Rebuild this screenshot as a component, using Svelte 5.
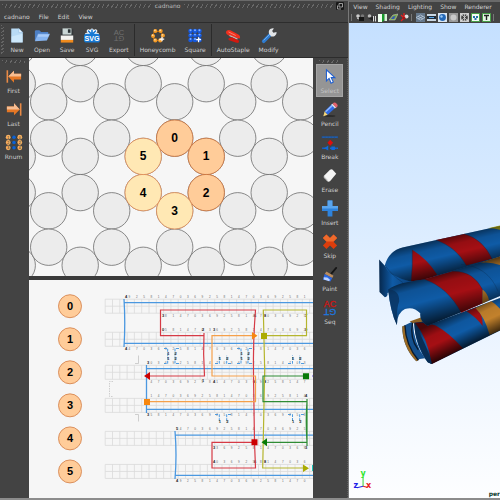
<script>
  const menus = ['cadnano', 'File', 'Edit', 'View'];
  const mainTools = [
    ['New', 'Open', 'Save', 'SVG', 'Export'],
    ['Honeycomb', 'Square'],
    ['AutoStaple', 'Modify']
  ];
  const sliceTools = ['First', 'Last', 'Rnum'];
  const pathTools = ['Select', 'Pencil', 'Break', 'Erase', 'Insert', 'Skip', 'Paint', 'Seq'];
  let active = $state('Select');

  const sceneMenus = ['View', 'Shading', 'Lighting', 'Show', 'Renderer'];
  const sceneTools = [
    ['camera', 'reel', 'book', 'plane', 'axis'],
    ['grid', 'film', 'ball', 'disc', 'wire', 'tex', 'light']
  ];

  // Honeycomb lattice: two alternating column types
  const lattice = [];
  for (let c = 0; c < 10; c++) {
    const x = 17.2 + c * 31.5;
    const ys = c % 2 === 0 ? [47.4, 83.7, 156.4, 192.6, 265.3] : [29.3, 101.8, 138.2, 210.8, 247.2];
    for (const y of ys) lattice.push({ x, y });
  }
  const helices = [
    { n: 0, x: 174.7, y: 138.2, scaf: true },
    { n: 1, x: 206.2, y: 156.4, scaf: true },
    { n: 2, x: 206.2, y: 192.6, scaf: true },
    { n: 3, x: 174.7, y: 210.8, scaf: false },
    { n: 4, x: 143.2, y: 192.6, scaf: false },
    { n: 5, x: 143.2, y: 156.4, scaf: false }
  ];

  const rows = [0, 1, 2, 3, 4, 5].map((n) => ({ n, y: 306.2 + n * 33.05 }));
  const cell = 7.3;
  const cols = Array.from({ length: 29 }, (_, i) => 105.2 + i * cell);
  const above = [124, 160, 146, 146, 175, 212];
  const below = [160, 124, 146, 146, 212, 175];
  const digits = (from, seed) =>
    cols.map((x, i) => ({ x: x + 1.5, d: (i * 3 + seed) % 10 })).filter((p) => p.x > from - 2 && p.x < 311);

  const brackets = [
    'M164 348.5h3.7v15h-3.7', 'M179 348.5h-4v15h4',
    'M215 363.5h4.3v-8', 'M231 363.5h-4.3v-8',
    'M237 348.5h4v15h-4', 'M252 348.5h-4v15h4',
    'M288 363.5h4.5v-8', 'M304 363.5h-4.3v-8',
    'M215 414.5h4.3v7', 'M231 414.5h-4.3v7',
    'M288 414.5h4.5v7', 'M304 414.5h-4.3v7'
  ];
  const marks = [[167.7, 353], [175, 353], [167.7, 358], [175, 358], [219.3, 358], [226.7, 358], [241, 353], [248, 353], [241, 358], [248, 358], [292.5, 358], [299.7, 358], [219.3, 421], [226.7, 421], [292.5, 421], [299.7, 421]];
</script>

{#snippet icon(name)}
  <svg class="icon" viewBox="0 0 18 18" aria-hidden="true">
    {#if name === 'New'}
      <path d="M2.500 1h8.500l4.500 4.500V17h-13z" fill="#b9dbf5" />
      <path d="M3 10l12-3v9.500H3z" fill="#cde8fb" />
      <path d="M11 1l4.500 4.500H11z" fill="#eef8ff" stroke="#7fb2dc" stroke-width=".5" />
    {:else if name === 'Open'}
      <path d="M1 15V4l1-1h4l2 2h8v3z" fill="#4d7fc4" />
      <path d="M1 15.500L4.500 7H18l-3.500 7.500z" fill="#86b4f0" />
      <path d="M4.800 8H17l-1 2.500H4z" fill="#a9cbf8" />
    {:else if name === 'Save'}
      <path d="M2 2h14v15H2z" fill="#34383a" />
      <path d="M4 1h10v7H4z" fill="#c9d6d4" />
      <path d="M10 2h3v4h-3z" fill="#2c3436" />
      <path d="M2 9h14v5H2z" fill="#f4f4f0" />
      <path d="M2 14h14v3H2z" fill="#f08a1c" />
    {:else if name === 'SVG'}
      <g stroke="#fff" stroke-width="4" stroke-linecap="round"><path d="M9 8V3M9 8L5 4M9 8l4-4M9 8H3M9 8h6" /></g>
      <rect x="0" y="7" width="18" height="10" rx="3" fill="#1779d4" />
      <g stroke="#1779d4" stroke-width="1.800" stroke-linecap="round"><path d="M9 8V3M9 8L5 4M9 8l4-4" /></g>
      <text x="9" y="15.200" text-anchor="middle" font-size="8" font-weight="bold" fill="#fff">SVG</text>
    {:else if name === 'Export'}
      <g font-size="8.500" fill="#707070" text-anchor="middle">
        <text x="9" y="8">AC</text>
        <text x="9" y="8" transform="rotate(180 9 9)">GT</text>
      </g>
    {:else if name === 'Seq'}
      <g font-size="10" text-anchor="middle" stroke-width=".3">
        <text x="9" y="8.500" fill="#d01414" stroke="#d01414">AC</text>
        <text x="9" y="8.500" fill="#1c78e0" stroke="#1c78e0" transform="rotate(180 9 9.500)">GT</text>
      </g>
    {:else if name === 'Honeycomb'}
      <path d="M5 4.500L12 4.500 15 9.500 12 14.500 5 14.500 2.500 9.500z" fill="none" stroke="#c96a00" stroke-width="1" />
      {#each [[6, 4], [12, 4], [3.5, 9.500], [14.500, 9], [6, 14.500], [11.500, 14.500]] as [x, y]}
        <circle cx={x} cy={y} r="2.300" fill="#f39a26" /><circle cx={x - 0.5} cy={y - 0.8} r="1" fill="#ffd798" />
      {/each}
      <path d="M13.500 10.500v5M11 13h5" stroke="#fff" stroke-width="1.400" />
    {:else if name === 'Square'}
      {#each [4, 9, 14] as x}{#each [4, 9, 14] as y}
        <circle cx={x} cy={y} r="2.600" fill="#1558dd" /><circle cx={x} cy={y - 1} r="1.100" fill="#7fb0ff" />
      {/each}{/each}
      <path d="M13 11v5.500M10.300 13.700h5.500" stroke="#fff" stroke-width="1.400" />
    {:else if name === 'AutoStaple'}
      <path d="M1 5Q2 2 6 3L15 8q3 2 1.500 4.500L14 12 4 9Q1 8 1 5z" fill="#f0301e" />
      <path d="M5 9l9 4" stroke="#bbb" stroke-width="1.500" />
      <path d="M4 12l4-1 8 4-1 2.500-3-.5-8-3z" fill="#d3190f" />
      <path d="M4 5l8 4" stroke="#ff8574" stroke-width="1" />
    {:else if name === 'Modify'}
      <path d="M3 15.500L10.500 8" stroke="#2e7bd0" stroke-width="4" stroke-linecap="round" />
      <path d="M3 14.500L10 7.500" stroke="#7cb8f2" stroke-width="1" />
      <path d="M9 7Q8 3 11 1.500q2-1 3.500-.5L12.500 4l1.500 2 3.500-1q.5 3-2 4.500-2 1-4 .5z" fill="#e2e5e8" />
    {:else if name === 'First' || name === 'Last'}
      <g transform={name === 'Last' ? 'rotate(180 9 9)' : undefined}>
        <path d="M1.500 2v14" stroke="#e98a45" stroke-width="1.800" />
        <path d="M2.500 9L9 2.500V6h8v6.500H9V16z" fill="#e57725" />
        <path d={name === 'Last' ? 'M2.500 9L9 16v-3.500h8V9z' : 'M2.500 9L9 2.500V6h8v3z'} fill="#f6bd92" />
      </g>
    {:else if name === 'Rnum'}
      {#each [3, 9, 15] as y, i}
        <path d="M3 {y}h12" stroke="#234" stroke-width="1" />
        <circle cx="2.500" cy={y} r="2.700" fill="#f7b060" /><circle cx="15.500" cy={y} r="2.700" fill="#f7b060" />
        <circle cx="9" cy={y} r="2" fill="#0b62d6" />
        <text x="2.500" y={y + 1.500} text-anchor="middle" font-size="4" fill="#222">{i + 1}</text>
        <text x="15.500" y={y + 1.500} text-anchor="middle" font-size="4" fill="#222">{i * 2}</text>
      {/each}
    {:else if name === 'Select'}
      <path d="M5 1.500V14l3-2.800 2.200 5.300 2.500-1.200-2.300-5H14.500z" fill="#fff" stroke="#1f5fd0" stroke-width="1.200" />
    {:else if name === 'Pencil'}
      <ellipse cx="9" cy="16.300" rx="6" ry="1.200" fill="#2c2c2c" />
      <path d="M1.500 16.500L3 11 6.500 15z" fill="#f5d77a" />
      <path d="M3 11L11.500 2.500 15.500 6.500 6.500 15z" fill="#2e6be8" />
      <path d="M4 11.500L12 4" stroke="#8db8ff" stroke-width="1.800" />
      <path d="M10.500 3.500l4 4.500 1.500-1.500-4-4z" fill="#ddd" />
      <path d="M12 2.500q2-2.500 4.500 0t-.5 4.500z" fill="#e4626b" />
    {:else if name === 'Break'}
      <path d="M0 3h18M0 15.500h6M9 15.500h9" stroke="#1766cc" stroke-width="1.500" />
      <path d="M0 1.500v3M3.500 1.500v3M7 1.500v3M10.500 1.500v3M14 1.500v3M17.500 1.500v3M1 14v3M16 14v3" stroke="#1c4d8f" stroke-width=".6" />
      <path d="M7 12.500v5.500L2.500 15.500zM10.500 13.500h4v4h-4z" fill="#0f6adb" />
      <path d="M9.300 6l3.200 3.300-3.200 3.300-3.200-3.300z" fill="#e00d0d" />
    {:else if name === 'Erase'}
      <path d="M2 9.500L9 2.500q2-1 3 0l4 4.500-7 8.500q-2 1-3 0z" fill="#f4f4f4" />
      <path d="M2 9.500L6.500 14l-.5 1.500-4-4z" fill="#c3c3c3" />
    {:else if name === 'Insert'}
      <path d="M6.300 0h5.400v6.300H18v5.400h-6.300V18H6.300v-6.300H0V6.300h6.300z" fill="#2f83dc" />
      <path d="M6.300 0h5.400v6.300H18V9H0V6.300h6.300z" fill="#5aa5ee" />
    {:else if name === 'Skip'}
      <path d="M5 1l4 4 4-4 4 4-4 4.300 4 4.200L13 17.500l-4-4-4 4-4-4 4-4.200L1 5z" fill="#dc3d0c" />
      <path d="M5 1l4 4 4-4 4 4-4 4H5L1 5z" fill="#ee6a2c" />
    {:else if name === 'Paint'}
      <path d="M10.500 8L16 1.500" stroke="#151515" stroke-width="2" stroke-linecap="round" />
      <path d="M5 5.500l8 5-1.500 2.500L3 8.500z" fill="#b98b5d" />
      <path d="M3 8.500l8.500 4.500L9.500 17Q5 15 1 15z" fill="#2a66e0" />
      <path d="M2 12l4 .5 3 2.500-1 1.500-6-2z" fill="#bcd3ff" />
    {/if}
  </svg>
{/snippet}

{#snippet sceneIcon(name)}
  <svg class="mini" viewBox="0 0 9 9" aria-hidden="true">
    {#if name === 'camera'}
      <circle cx="2" cy="3" r="1.800" fill="#ccc" /><circle cx="6.500" cy="3" r="1.800" fill="#777" /><path d="M3 4h5v4H3z" fill="#161616" /><path d="M1 5l2 1" stroke="#ddd" />
    {:else if name === 'reel'}
      <circle cx="2.500" cy="3" r="1.800" fill="#bbb" /><path d="M1 5l5-1v4z" fill="#222" /><path d="M6.500 3v5.500M8.500 3v5.500" stroke="#ddd" />
    {:else if name === 'book'}
      <path d="M0 1h4v8H0z" fill="#f0fff0" /><path d="M4 1h2.500v6L4 9z" fill="#169b2a" /><path d="M6.500 1H9v7H6.500z" fill="#d8f5d8" />
    {:else if name === 'plane'}
      <path d="M0 7l4-5 5-1-3 6z" fill="#7cab45" stroke="#ccc" stroke-width=".5" /><path d="M2 6l2-2.500 2.500-.5-1.500 3z" fill="#3355bb" />
    {:else if name === 'axis'}
      <path d="M1 8l3-3M4 5L1 2M4 5V0" stroke="#e02020" stroke-width="1.400" /><circle cx="6.500" cy="3.500" r="2" fill="#ddd" /><circle cx="4" cy="5" r="1.400" fill="#b40f0f" />
    {:else if name === 'grid'}
      <path d="M0 0h9v9H0z" fill="#65788c" /><path d="M0 4.500L4.500 2 9 4.500 4.500 7zM2 3.300L7 6M7 3.300L2 6" stroke="#cfdeee" fill="none" stroke-width=".6" />
    {:else if name === 'film'}
      <path d="M0 1h9v7H0z" fill="#c9d6e2" /><path d="M0 3h9v3H0z" fill="#1f2c3a" /><path d="M2 4.500h5" stroke="#58a5e8" />
    {:else if name === 'ball'}
      <path d="M0 0h9v9H0z" fill="#dbe6f2" /><circle cx="4.500" cy="4.500" r="3.400" fill="#2368b8" /><circle cx="3.500" cy="3.500" r="1.200" fill="#9dcaf5" />
    {:else if name === 'disc'}
      <path d="M0 0h9v9H0z" fill="#999" /><circle cx="4.500" cy="4.500" r="3" fill="#c9c9c9" />
    {:else if name === 'wire'}
      <path d="M0 0h9v9H0z" fill="#ccc" /><circle cx="4.500" cy="4.500" r="3.300" fill="#444" /><path d="M1 1l7 7M8 1L1 8M4.500 1v7" stroke="#ddd" stroke-width=".7" />
    {:else if name === 'tex'}
      <path d="M.5.5h8v8h-8z" fill="#f3fbf3" stroke="#48a048" /><path d="M2 3h2v2H2zM5 3h2v2H5zM3.500 5h2v2h-2z" fill="#2370a8" />
    {:else}
      <path d="M.5.5h8v8h-8z" fill="#e6f6e6" stroke="#48a048" /><path d="M2 2.500h5M4.500 2.500V7" stroke="#222" stroke-width="1.400" />
    {/if}
  </svg>
{/snippet}

<main class="desk">
  <section class="editor" aria-label="cadnano">
    <header class="title">
      <span class="hatch"></span><span>cadnano</span><span class="hatch"></span>
      <button class="float" aria-label="Float window">
        <svg viewBox="0 0 8 8"><rect width="8" height="8" rx="1" fill="#181818" /><path d="M3 1.500h3.500V5H3zM1.500 3.500V7H5" fill="none" stroke="#bbb" stroke-width=".8" /></svg>
      </button>
    </header>
    <nav class="menu">
      {#each menus as m}<button>{m}</button>{/each}
    </nav>
    <div class="toolbar">
      <span class="grip"></span>
      {#each mainTools as group, g}
        {#if g}<span class="sep"></span>{/if}
        {#each group as t}
          <button class="tool">{@render icon(t)}<span>{t}</span></button>
        {/each}
      {/each}
    </div>

    <div class="work">
      <div class="rail">
        <span class="hatch short"></span>
        {#each sliceTools as t}
          <button class="tool">{@render icon(t)}<span>{t}</span></button>
        {/each}
      </div>

      <div class="panes">
        <svg class="pane" viewBox="29 58 285 218" preserveAspectRatio="xMinYMin slice" role="img" aria-label="Slice view">
          <g fill="#ececec" stroke="#6c6c6c" stroke-width=".8">
            {#each lattice as p}<circle cx={p.x} cy={p.y} r="18.200" />{/each}
          </g>
          {#each helices as h}
            <circle cx={h.x} cy={h.y} r="18.200" fill={h.scaf ? '#ffcc99' : '#ffe8b4'} stroke={h.scaf ? '#c9703a' : '#e08a55'} stroke-width=".8" />
            <text class="num" x={h.x} y={h.y + 4} font-size="12">{h.n}</text>
          {/each}
        </svg>
        <div class="splitter"></div>
        <svg class="pane" viewBox="29 280 285 218" preserveAspectRatio="xMinYMin slice" role="img" aria-label="Path view">
          {#each rows as r}
            <circle cx="70" cy={r.y} r="11.500" fill="#ffcc99" stroke="#d27c45" stroke-width=".8" />
            <text class="num" x="70" y={r.y + 4} font-size="11">{r.n}</text>
            <g stroke="#dadada" stroke-width=".8" fill="none">
              <path d="M105.200 {r.y - 7}H330M105.200 {r.y}H330M105.200 {r.y + 7}H330" />
              {#each cols as x}<path d="M{x} {r.y - 7}v14" />{/each}
            </g>
            <g class="tiny">
              {#each digits(above[r.n], r.n) as p}<text x={p.x} y={r.y - 8.500}>{p.d}</text>{/each}
              {#each digits(below[r.n], r.n + 4) as p}<text x={p.x} y={r.y + 11}>{p.d}</text>{/each}
            </g>
          {/each}
          <g fill="none" stroke="#c4c4c4" stroke-width=".8">
            <path d="M135 363.500h3.500v-8M135 414.500h3.500v7" />
            <path d="M113 381.500h-3.500v15h3.500" stroke-dasharray="1.500 1" />
          </g>
          <g fill="none" stroke="#4f9bdf" stroke-width="1" stroke-dasharray="3 1">
            {#each brackets as d}<path {d} />{/each}
          </g>
          <g class="tiny mark">
            {#each marks as [x, y], i}<text x={x - 0.5} y={y + 1.500}>{i % 2 ? 2 : 1}</text>{/each}
            <text x="125" y="298">4</text><text x="125" y="350">4</text><text x="162" y="317">3</text><text x="162" y="331">0</text>
            <text x="202" y="331">2</text><text x="202" y="382">1</text><text x="147" y="364">3</text><text x="147" y="416">3</text>
            <text x="176" y="430">5</text><text x="176" y="482">4</text><text x="213" y="331">3</text><text x="213" y="383">4</text>
            <text x="254" y="317">6</text><text x="264" y="317">8</text><text x="305" y="317">7</text><text x="305" y="331">0</text>
            <text x="254" y="383">6</text><text x="264" y="383">8</text><text x="305" y="397">4</text><text x="305" y="449">3</text>
            <text x="213" y="449">3</text><text x="213" y="463">4</text><text x="254" y="463">6</text><text x="264" y="463">8</text>
          </g>
          <g fill="none" stroke="#4b98e0" stroke-width="1.300">
            <path d="M320 302.700H124.500M124.500 343.300H320M124 299Q125.500 323 124 347" />
            <path d="M320 368.700H146.500M146.500 409.300H320M146.500 365v48" />
            <path d="M320 435.200H175.500M175.500 475.300H320M175 431Q177 455 175 479" />
          </g>
          <g fill="none" stroke-width="1.200">
            <path d="M148 376H204.500Q203 354 204 333" stroke="#d63a45" />
            <path d="M204 335.700H160.500V310H255.500Q253 340 253.500 376T254.500 442" stroke="#d63a45" />
            <path d="M254 442.300H212V468H255.500L254.500 442" stroke="#d63a45" />
            <path d="M254 335.700H212V376H255.500V401.700H147" stroke="#f5a04a" />
            <path d="M263.500 335.700H306.500V310H263.300L264.700 370 262.700 468H304" stroke="#b5b52e" />
            <path d="M305 376H263V401.700H307Q305.500 420 307 442.300H264M307 399v47" stroke="#2f8c35" />
          </g>
          <path d="M144 376l6-4v8zM251.500 439.300h6v6h-6z" fill="#cc0000" />
          <path d="M144 399h6v6h-6zM252 332l5.500 3.700-5.500 3.700z" fill="#f7870f" />
          <path d="M261 333h6v6h-6zM303 464.500l6 3.700-6 3.700z" fill="#abab00" />
          <path d="M303 373.300h6v6h-6zM261.500 442.300l5.500-4v8z" fill="#077a07" />
          <path d="M312 465h3v6h-3zM313 400h2v4h-2z" fill="#1cc7b8" />
          <path d="M313.300 309h2v8h-2zM313.300 335h2v8h-2z" fill="#8f79ea" />
          <circle cx="314" cy="376" r="1.500" fill="#4020d0" />
        </svg>
      </div>

      <div class="rail right">
        <span class="hatch short"></span>
        {#each pathTools as t}
          <button class="tool" class:on={active === t} aria-pressed={active === t} onclick={() => (active = t)}>{@render icon(t)}<span>{t}</span></button>
        {/each}
      </div>
    </div>
  </section>

  <section class="scene" aria-label="3D view">
    <nav class="menu scene-menu">
      {#each sceneMenus as m}<button>{m}</button>{/each}
    </nav>
    <div class="scene-tools">
      {#each sceneTools as group}
        <span class="tick"></span>
        {#each group as t}<button aria-label={t}>{@render sceneIcon(t)}</button>{/each}
      {/each}
      <span class="tick"></span>
    </div>
    <svg class="viewport" viewBox="350 23 150 475" preserveAspectRatio="xMinYMin slice" role="img" aria-label="Helix model">
      <defs>
        <linearGradient id="t1" gradientUnits="userSpaceOnUse" x1="285" y1="82" x2="310" y2="188">
          <stop offset="0" stop-opacity=".5" /><stop offset=".25" stop-opacity=".1" /><stop offset=".5" stop-opacity="0" /><stop offset="1" stop-opacity=".65" />
        </linearGradient>
        <linearGradient id="t2" gradientUnits="userSpaceOnUse" x1="275" y1="190" x2="310" y2="322">
          <stop offset="0" stop-opacity=".55" /><stop offset=".2" stop-opacity=".1" /><stop offset=".5" stop-opacity="0" /><stop offset="1" stop-opacity=".7" />
        </linearGradient>
        <linearGradient id="t3" gradientUnits="userSpaceOnUse" x1="305" y1="318" x2="350" y2="415">
          <stop offset="0" stop-opacity=".55" /><stop offset=".3" stop-opacity=".05" /><stop offset=".55" stop-opacity="0" /><stop offset="1" stop-opacity=".75" />
        </linearGradient>
        <linearGradient id="leaf" x1="0" x2="1"><stop offset="0" stop-color="#06284d" /><stop offset=".4" stop-color="#0f5ba6" /><stop offset="1" stop-color="#0a3d75" /></linearGradient>
      </defs>
      <g transform="translate(345 210) scale(.33333)">
        <path d="M105 145L126 168Q160 185 206 190V213L130 245Q132 255 122 258L106 242z" fill="url(#leaf)" />
        <path d="M122 162Q135 118 175 109L480 42V160L250 215Q190 215 155 195Q128 185 122 162z" fill="#0f5ba6" />
        <path d="M204 116Q250 145 278 190L240 212H200Q206 165 204 116zM275 87L360 69Q415 85 442 143L365 163Q335 108 275 87z" fill="#a50f14" />
        <path d="M430 52L480 40V60Q455 52 430 52z" fill="#a8a31c" />
        <path d="M122 162Q135 118 175 109L480 42V160L250 215Q190 215 155 195Q128 185 122 162z" fill="url(#t1)" />
        <path d="M204 116Q206 165 200 212M275 87Q335 108 365 163M360 69Q415 85 442 143M122 162Q145 195 176 214" fill="none" stroke="#0a2340" stroke-opacity=".5" stroke-width="2" />

        <path d="M174 345L205 330Q210 400 242 440L226 442L216 449Q174 405 174 345z" fill="#14508e" />
        <path d="M174 345L182 342Q184 400 222 446L216 449Q174 405 174 345z" fill="#9a6a24" />
        <path d="M182 342Q184 400 222 446M205 332Q195 380 222 415" stroke="#091b30" stroke-width="4" fill="none" />
        <path d="M196 330L240 315L280 335L210 336z" fill="#8c6124" />
        <path d="M210 334Q240 328 280 330L480 255V350L262 457L250 452Q212 405 210 334z" fill="#0f5ba6" />
        <path d="M212 334Q240 330 274 342Q315 365 355 410L262 457Q250 380 212 334zM366 300L396 288Q415 310 414 344Q395 318 366 300z" fill="#a50f14" />
        <path d="M392 290L440 270Q460 282 480 310V350L435 371Q420 315 392 290z" fill="#c2812c" />
        <path d="M210 334Q240 328 280 330L480 255V350L262 457L250 452Q212 405 210 334z" fill="url(#t3)" />
        <path d="M210 334Q214 405 252 453L262 457Q258 425 210 334z" fill="#082d55" />

        <path d="M132 235Q160 213 240 205L480 132V248L350 303L250 343Q225 330 228 306Q208 284 182 293Q158 304 158 341Q138 300 132 235z" fill="#0f5ba6" />
        <path d="M240 204L325 180Q385 178 414 235V276L350 304Q310 228 240 204z" fill="#a50f14" />
        <path d="M408 155L480 132V168Q445 150 408 155zM414 235Q430 248 433 267L413 277z" fill="#c2812c" />
        <path d="M132 235Q160 213 240 205L480 132V248L350 303L250 343Q225 330 228 306Q208 284 182 293Q158 304 158 341Q138 300 132 235z" fill="url(#t2)" />
        <path d="M132 235Q165 235 165 270Q156 290 158 341Q138 300 132 235z" fill="#082d55" fill-opacity=".7" />
        <path d="M240 204Q310 228 350 304M325 180Q385 178 414 235M350 160Q430 165 460 240" fill="none" stroke="#0a1830" stroke-opacity=".35" stroke-width="2" />
      </g>
      <g font-size="8" font-weight="bold">
        <path d="M364 475v9" stroke="#35d435" /><path d="M364 484l4 1" stroke="#e02020" /><path d="M364 484l-6 1.500" stroke="#3030e0" />
        <text x="361.500" y="474" fill="#2ee62e">y</text><text x="367" y="486" fill="#e8201c">x</text><text x="354.500" y="486" fill="#2020e8">z</text>
      </g>
      <text x="489" y="494" font-size="6" font-weight="bold" fill="#0c3a2a">per</text>
    </svg>
  </section>
</main>

<style>
  :global(body) { margin: 0; background: #444; }
  .desk {
    display: flex;
    box-sizing: border-box;
    height: 100vh;
    border-bottom: 2px solid #8c8c8c;
    background: #434343;
    color: #d2d2d2;
    font: 6px/8px "DejaVu Sans", "Liberation Sans", sans-serif;
    overflow: hidden;
  }
  button {
    margin: 0;
    padding: 0;
    border: 0;
    background: none;
    color: inherit;
    font: inherit;
    white-space: nowrap;
  }
  svg { display: block; }
  .editor { flex: 349 1 0; min-width: 0; display: flex; flex-direction: column; border-top: 1px solid #6a6a6a; box-sizing: border-box; }
  .title { display: flex; align-items: center; gap: 3px; height: 10px; padding: 0 4px 0 2px; color: #bdbdbd; }
  .hatch {
    flex: 1;
    height: 4px;
    background: repeating-linear-gradient(120deg, #686868 0 1px, #414141 1px 4px);
  }
  .float { width: 8px; height: 8px; }
  .menu { display: flex; align-items: center; gap: 9px; height: 11px; padding: 0 4px; border-bottom: 1px solid #2d2d2d; }
  .toolbar { display: flex; gap: 1px; height: 34px; border-bottom: 1px solid #2c2c2c; }
  .grip { width: 3px; margin: 2px 0 2px 1px; background: repeating-linear-gradient(150deg, #666 0 1px, #434343 1px 3px); }
  .sep { width: 1px; margin: 1px 0; background: #2b2b2b; }
  .tool { display: flex; flex-direction: column; align-items: center; padding: 4px 4px 0; gap: 2px; color: #cfcfcf; }
  .icon { width: 16px; height: 17px; overflow: visible; font-family: "Liberation Sans", Arial, sans-serif; }
  .work { flex: 1; min-height: 0; display: grid; grid-template-columns: 29px 1fr 35px; }
  .rail { display: flex; flex-direction: column; gap: 2px; padding: 1px 2px 0 0; min-height: 0; }
  .short { flex: none; height: 3px; margin: 1px 2px 0; }
  .rail .tool { box-sizing: border-box; height: 31px; padding: 3px 0 0; }
  .right { padding: 1px 5px 0 4px; border-right: 1px dotted #5c5c5c; }
  .on { background: #959595; outline: 1px solid #a5a5a5; color: #c8c8c8; }
  .rail .on { color: #c4c4c4; }
  .panes { display: grid; grid-template-rows: 1fr 4px 1fr; min-height: 0; }
  .pane { width: 100%; height: 100%; min-height: 0; background: #f6f6f6; }
  .splitter { background: #3a3a3a; }
  .num { font-family: "Liberation Sans", Arial, sans-serif; font-weight: bold; text-anchor: middle; fill: #000; }
  .tiny { font: 3px "Liberation Sans", Arial, sans-serif; fill: #666; }
  .mark { font-size: 4px; font-weight: bold; fill: #222; }
  .scene { flex: 151 1 0; min-width: 0; display: flex; flex-direction: column; border-left: 1px solid #787878; border-top: 2px solid #6a6a6a; box-sizing: border-box; }
  .scene-menu { height: 9px; border: 0; gap: 8px; padding: 0 4px; overflow: hidden; }
  .scene-tools { display: flex; align-items: center; gap: 2px; height: 12px; padding-left: 2px; overflow: hidden; }
  .scene-tools button { flex: none; }
  .mini { width: 9px; height: 9px; }
  .tick { flex: none; width: 1px; height: 7px; margin-right: 2px; background: #777; }
  .viewport { flex: 1; width: 100%; min-height: 0; background: linear-gradient(#c5e0ff, #d9ebff 40%, #eff6ff 72%, #fdfeff); font-family: "DejaVu Sans", sans-serif; }
</style>
